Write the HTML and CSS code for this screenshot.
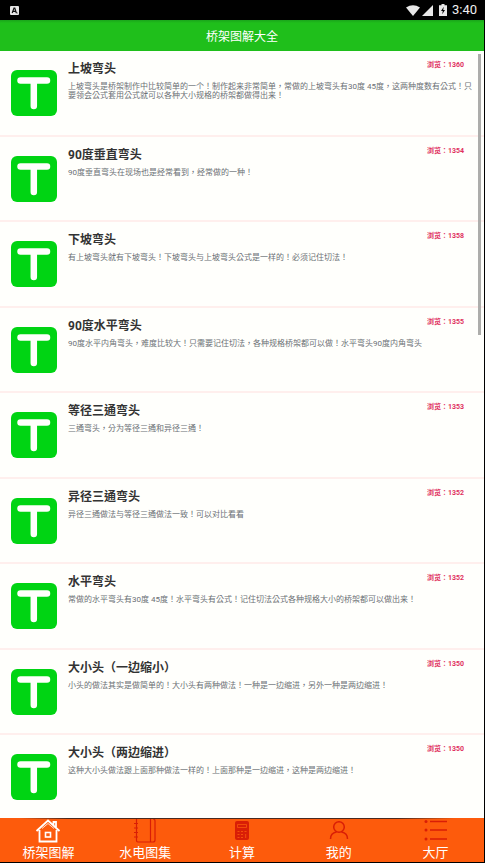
FILE: index.html
```html
<!DOCTYPE html>
<html lang="zh-CN">
<head>
<meta charset="utf-8">
<meta name="viewport" content="width=device-width, initial-scale=1">
<title>桥架图解大全</title>
<link rel="stylesheet" href="styles.css">
</head>
<body>
<svg class="defs" aria-hidden="true">
  <symbol id="tee" viewBox="0 0 46 46">
    <rect width="46" height="46" rx="6" fill="#00d413"/>
    <path d="M9.500 10.500H36M22.800 10.500V36" fill="none" stroke="#fffffc" stroke-width="6.500" stroke-linecap="round"/>
  </symbol>
</svg>
<div class="status">
  <svg class="ime" viewBox="0 0 9 9" aria-hidden="true"><rect width="9" height="9" rx="1" fill="#e6e6e6"/><path d="M2.200 7L4 2H4.800L6.300 7M3 5.400H5.500M6.500 7H7.500" fill="none" stroke="#111" stroke-width="1.200"/></svg>
  <div class="signals">
    <svg class="wifi" viewBox="0 0 14 11" aria-hidden="true"><path d="M0 2.500Q7-2 14 2.500L7 11Z" fill="#e8e8e8"/></svg>
    <svg class="cell" viewBox="0 0 11 11" aria-hidden="true"><path d="M11 0V11H0Z" fill="#e8e8e8"/></svg>
    <svg class="battery" viewBox="0 0 8 12" aria-hidden="true"><path d="M2.500 0H5.500V1.300H8V12H0V1.300H2.500Z" fill="#e8e8e8"/><path d="M4.800 2.800L2 7H3.800L3.200 10.300L6 6H4.200Z" fill="#000"/></svg>
    <time class="clock">3:40</time>
  </div>
</div>
<header class="bar"><h1>桥架图解大全</h1></header>
<main class="content">
  <div class="list" lang="zh-TW">
    <article class="row">
      <svg class="thumb" aria-hidden="true"><use href="#tee"/></svg>
      <div class="text"><h2>上坡弯头</h2><span class="views">浏览：1360</span>
      <p>上坡弯头是桥架制作中比较简单的一个！制作起来非常简单，常做的上坡弯头有30度 45度，这两种度数有公式！只要领会公式套用公式就可以各种大小规格的桥架都做得出来！</p></div>
    </article>
    <article class="row">
      <svg class="thumb" aria-hidden="true"><use href="#tee"/></svg>
      <div class="text"><h2>90度垂直弯头</h2><span class="views">浏览：1354</span>
      <p>90度垂直弯头在现场也是经常看到，经常做的一种！</p></div>
    </article>
    <article class="row">
      <svg class="thumb" aria-hidden="true"><use href="#tee"/></svg>
      <div class="text"><h2>下坡弯头</h2><span class="views">浏览：1358</span>
      <p>有上坡弯头就有下坡弯头！下坡弯头与上坡弯头公式是一样的！必须记住切法！</p></div>
    </article>
    <article class="row">
      <svg class="thumb" aria-hidden="true"><use href="#tee"/></svg>
      <div class="text"><h2>90度水平弯头</h2><span class="views">浏览：1355</span>
      <p>90度水平内角弯头，难度比较大！只需要记住切法，各种规格桥架都可以做！水平弯头90度内角弯头</p></div>
    </article>
    <article class="row">
      <svg class="thumb" aria-hidden="true"><use href="#tee"/></svg>
      <div class="text"><h2>等径三通弯头</h2><span class="views">浏览：1353</span>
      <p>三通弯头，分为等径三通和异径三通！</p></div>
    </article>
    <article class="row">
      <svg class="thumb" aria-hidden="true"><use href="#tee"/></svg>
      <div class="text"><h2>异径三通弯头</h2><span class="views">浏览：1352</span>
      <p>异径三通做法与等径三通做法一致！可以对比看看</p></div>
    </article>
    <article class="row">
      <svg class="thumb" aria-hidden="true"><use href="#tee"/></svg>
      <div class="text"><h2>水平弯头</h2><span class="views">浏览：1352</span>
      <p>常做的水平弯头有30度 45度！水平弯头有公式！记住切法公式各种规格大小的桥架都可以做出来！</p></div>
    </article>
    <article class="row">
      <svg class="thumb" aria-hidden="true"><use href="#tee"/></svg>
      <div class="text"><h2>大小头（一边缩小）</h2><span class="views">浏览：1350</span>
      <p>小头的做法其实是做简单的！大小头有两种做法！一种是一边缩进，另外一种是两边缩进！</p></div>
    </article>
    <article class="row">
      <svg class="thumb" aria-hidden="true"><use href="#tee"/></svg>
      <div class="text"><h2>大小头（两边缩进）</h2><span class="views">浏览：1350</span>
      <p>这种大小头做法跟上面那种做法一样的！上面那种是一边缩进，这种是两边缩进！</p></div>
    </article>
  </div>
  <div class="scrollbar"></div>
</main>
<nav class="tabs">
  <a class="tab active" href="#"><svg viewBox="0 0 26 24" aria-hidden="true"><path d="M1.500 12L13 1.500L24.500 12M4.500 11V22.500H21.500V11M18.500 6V3H21V8" fill="none" stroke="currentColor" stroke-width="1.800"/><path d="M7 9.500L13 4.500L19 9.500" fill="none" stroke="currentColor" stroke-width=".8"/><rect x="10.500" y="13.500" width="5" height="4.500" fill="none" stroke="currentColor" stroke-width="1.600"/></svg>桥架图解</a>
  <a class="tab" href="#"><svg viewBox="0 0 26 24" aria-hidden="true"><path d="M4.500 0V21.500Q4.500 23 6 23H21Q23 23 23 21V2Q23 0 21 0M18.500 0V23M2 4.500H6M2 9H6M2 13.500H6M2 18H6" fill="none" stroke="currentColor" stroke-width="1.200"/></svg>水电图集</a>
  <a class="tab" href="#"><svg viewBox="0 0 26 24" aria-hidden="true"><rect x="6" y="2" width="14" height="19" rx="2" fill="currentColor"/><path d="M8.500 5.500H17.500V8.500H8.500Z" fill="none" stroke="#fd5b0c" stroke-width=".7"/><path d="M8.500 12.500H10.500M12 12.500H14M15.500 12.500H17.500M8.500 15.500H10.500M12 15.500H14M8.500 18.500H10.500M12 18.500H14M16.700 15V19" stroke="#fd5b0c" stroke-width=".8"/></svg>计算</a>
  <a class="tab" href="#"><svg viewBox="0 0 26 24" aria-hidden="true"><circle cx="13" cy="8" r="5.300" fill="none" stroke="currentColor" stroke-width="1.500"/><path d="M4.500 20Q4.500 14 10.500 13M15.500 13Q21.500 14 21.500 20" fill="none" stroke="currentColor" stroke-width="1.500"/></svg>我的</a>
  <a class="tab" href="#"><svg viewBox="0 0 26 24" aria-hidden="true"><path d="M7 2.500H24M7 11H24M7 20H24" stroke="currentColor" stroke-width="1.500"/><circle cx="3" cy="2.500" r="1.500" fill="currentColor"/><circle cx="3" cy="11" r="1.500" fill="currentColor"/><circle cx="3" cy="20" r="1.500" fill="currentColor"/></svg>大厅</a>
</nav>
</body>
</html>
```
FILE: styles.css
```css
* { box-sizing: border-box; }

body {
  margin: 0;
  height: 100vh;
  display: flex;
  flex-direction: column;
  border-right: 1px solid #000;
  border-bottom: 1px solid #000;
  background: #fffffc;
  font-family: Roboto, "Noto Sans CJK SC", sans-serif;
}

h1, h2, p { margin: 0; }

svg { display: block; }

.defs { position: absolute; width: 0; height: 0; }

.status {
  flex: none;
  height: 20px;
  display: flex;
  align-items: center;
  justify-content: space-between;
  padding: 0 7px 0 10px;
  background: #000;
}

.ime { width: 9px; height: 9px; }
.signals { display: flex; align-items: center; }
.wifi { width: 14px; height: 11px; }
.cell { width: 11px; height: 11px; margin: 0 6px 0 2px; }
.battery { width: 8px; height: 12px; margin-right: 5px; }
.clock { color: #f0f0f0; font-size: 13px; font-weight: 400; line-height: 20px; }

.bar {
  flex: none;
  height: 31px;
  padding-top: 2px;
  background: linear-gradient(#1aa51b, #1fbf1b 3px);
  color: #fff;
  text-align: center;
}
.bar h1 { font-size: 12px; font-weight: 400; line-height: 30px; }

.content { position: relative; flex: 1; min-height: 0; overflow: hidden; }

/* The TC face centres its full-width punctuation */
.list {
  display: grid;
  grid-auto-rows: 86px 85px;
  font-family: Roboto, "Noto Sans CJK TC", sans-serif;
}

.row {
  display: flex;
  gap: 11px;
  padding: 0 8px 0 11px;
  border-bottom: 2px solid #ffefed;
}

.thumb { flex: none; width: 46px; height: 46px; margin-top: 19px; }

.text {
  flex: 1;
  display: grid;
  grid-template-columns: 1fr auto;
  align-content: start;
  padding-top: 8px;
}
.text h2 { color: #333; font-size: 12px; font-weight: 700; line-height: 20px; }
.views { margin-right: 12px; color: #e0315f; font-size: 7px; font-weight: 700; line-height: 13px; }
.text p { grid-column: 1 / -1; margin-top: 3px; color: #6b7075; font-size: 8px; line-height: 9px; }

.scrollbar {
  position: absolute;
  top: 3px;
  right: 3px;
  width: 3px;
  height: 281px;
  background: #adadab;
}

.tabs {
  flex: none;
  height: 44px;
  display: grid;
  grid-template-columns: repeat(5, 1fr);
  background:
    linear-gradient(90deg, transparent 4%, #4a2a20 14%, #4a2a20 82%, transparent 94%) top / 100% 1px no-repeat,
    #fd5b0c;
  padding-top: 1px;
}

.tab {
  display: flex;
  flex-direction: column;
  align-items: center;
  color: #fff;
  font-size: 13px;
  line-height: 20px;
  text-decoration: none;
}
.tab svg { width: 26px; height: 24px; color: #d91e06; }
.tab.active svg { color: #fff; }
```
